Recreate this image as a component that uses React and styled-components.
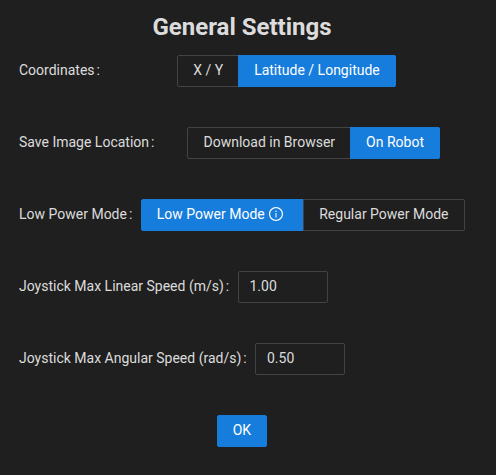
import React, { useState } from "react";
import styled, { createGlobalStyle, css } from "styled-components";

const GlobalStyle = createGlobalStyle`
  *, *::before, *::after { box-sizing: border-box; }
  body {
    margin: 0;
    background: #1f1f1f;
    color: rgba(255, 255, 255, 0.85);
    font: 14px/22px Roboto, "Liberation Sans", sans-serif;
  }
`;

const Panel = styled.main`
  width: 445.75px;
  margin-left: 19px;
  padding-top: 8px;
`;

const Title = styled.h1`
  width: 446px;
  margin: 0 0 9px;
  font-size: 24px;
  line-height: 38px;
  font-weight: 700;
  text-align: center;
`;

const FormItem = styled.div`
  display: flex;
  height: 32px;
  margin-bottom: 40px;
`;

const Label = styled.label`
  flex: none;
  line-height: 30px;
  white-space: nowrap;

  &::after {
    content: ":";
    margin: 0 8.25px 0 2px;
  }
`;

const Control = styled.div`
  flex: 1;
  display: flex;
  justify-content: ${({ $align }) => $align || "center"};
`;

const RadioGroup = styled.div`
  display: flex;
`;

const RadioButton = styled.button`
  display: flex;
  align-items: center;
  height: 32px;
  padding: 0 15px 2px;
  border: 1px solid #434343;
  border-left-width: 0;
  background: transparent;
  color: inherit;
  font: inherit;
  white-space: nowrap;
  cursor: pointer;

  &:first-child {
    border-left-width: 1px;
    border-radius: 2px 0 0 2px;
  }

  &:not(:first-child) {
    box-shadow: -1px 0 0 ${({ $checked }) => ($checked ? "#177ddc" : "#434343")};
  }

  &:last-child {
    border-radius: 0 2px 2px 0;
  }

  ${({ $checked }) =>
    $checked &&
    css`
      background: #177ddc;
      border-color: #177ddc;
      color: #fff;
    `}
`;

const InfoIcon = styled.svg`
  width: 14px;
  height: 14px;
  margin: 0 5px 0 4.500px;
  fill: currentColor;
`;

const NumberInput = styled.input`
  width: 90px;
  height: 32px;
  padding: 0 11px 2px;
  border: 1px solid #434343;
  border-radius: 2px;
  outline: none;
  background: transparent;
  color: inherit;
  font: inherit;
`;

const PrimaryButton = styled.button`
  height: 32px;
  padding: 0 15px 2px;
  border: 1px solid #177ddc;
  border-radius: 2px;
  background: #177ddc;
  color: #fff;
  font: inherit;
  cursor: pointer;
`;

function InfoCircle() {
  return (
    <InfoIcon viewBox="64 64 896 896" aria-hidden="true">
      <path d="M512 64C264.600 64 64 264.600 64 512s200.600 448 448 448 448-200.600 448-448S759.400 64 512 64zm0 820c-205.400 0-372-166.600-372-372s166.600-372 372-372 372 166.600 372 372-166.600 372-372 372z" />
      <path d="M464 336a48 48 0 1 0 96 0 48 48 0 1 0-96 0zm72 112h-48c-4.400 0-8 3.600-8 8v272c0 4.400 3.600 8 8 8h48c4.400 0 8-3.600 8-8V456c0-4.400-3.600-8-8-8z" />
    </InfoIcon>
  );
}

function RadioField({ label, options, initial }) {
  const [selected, setSelected] = useState(initial);
  return (
    <FormItem>
      <Label>{label}</Label>
      <Control>
        <RadioGroup role="radiogroup" aria-label={label}>
          {options.map(({ text, info }, i) => (
            <RadioButton
              key={text}
              type="button"
              role="radio"
              aria-checked={selected === i}
              $checked={selected === i}
              onClick={() => setSelected(i)}
            >
              {text}
              {info && <InfoCircle />}
            </RadioButton>
          ))}
        </RadioGroup>
      </Control>
    </FormItem>
  );
}

function NumberField({ id, label, value }) {
  return (
    <FormItem>
      <Label htmlFor={id}>{label}</Label>
      <Control $align="flex-start">
        <NumberInput id={id} inputMode="decimal" defaultValue={value} />
      </Control>
    </FormItem>
  );
}

export default function App() {
  return (
    <>
      <GlobalStyle />
      <Panel>
        <Title>General Settings</Title>
        <RadioField
          label="Coordinates"
          options={[{ text: "X / Y" }, { text: "Latitude / Longitude" }]}
          initial={1}
        />
        <RadioField
          label="Save Image Location"
          options={[{ text: "Download in Browser" }, { text: "On Robot" }]}
          initial={1}
        />
        <RadioField
          label="Low Power Mode"
          options={[{ text: "Low Power Mode", info: true }, { text: "Regular Power Mode" }]}
          initial={0}
        />
        <NumberField id="linear" label="Joystick Max Linear Speed (m/s)" value="1.00" />
        <NumberField id="angular" label="Joystick Max Angular Speed (rad/s)" value="0.50" />
        <Control>
          <PrimaryButton type="button">OK</PrimaryButton>
        </Control>
      </Panel>
    </>
  );
}
